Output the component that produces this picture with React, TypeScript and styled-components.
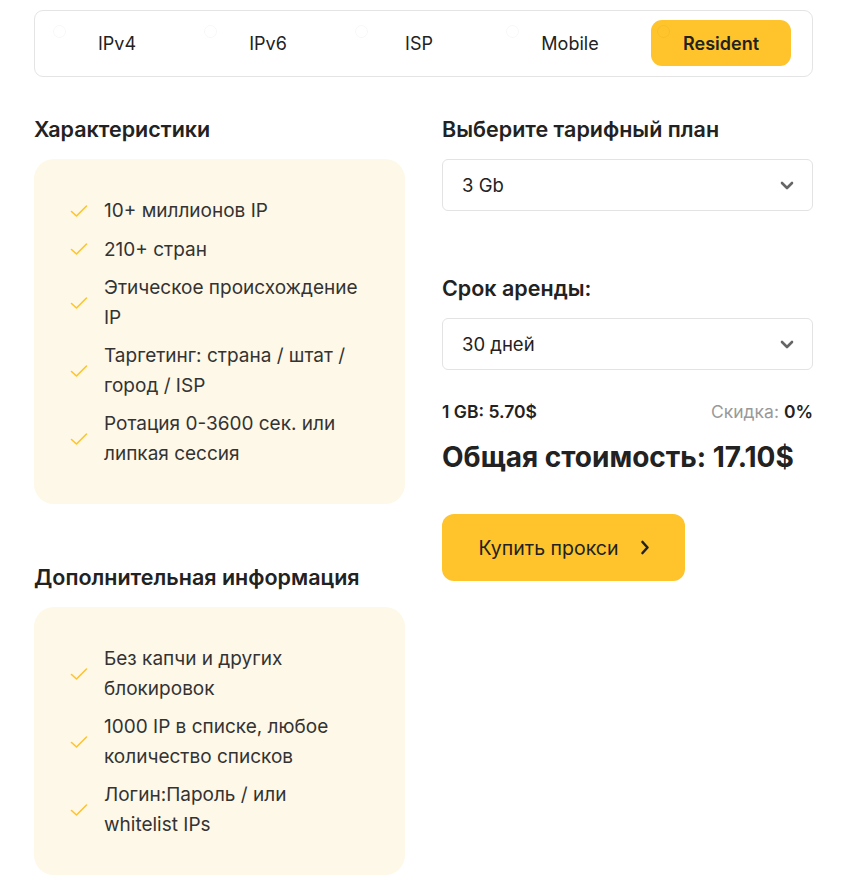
import React from "react";
import styled, { createGlobalStyle } from "styled-components";

const Global = createGlobalStyle`
  html, body { margin: 0; padding: 0; background: #fff; }
  body { font-family: Inter, "Noto Sans", sans-serif; color: #222; }
  * { box-sizing: border-box; }
`;

const Page = styled.div`
  width: 779px;
  margin: 10px 0 0 34px;
`;

const TabBar = styled.div`
  display: flex;
  gap: 11px;
  padding: 9px 12px;
  border: 1px solid #e4e4e4;
  border-radius: 9px;
  height: 67px;
`;

const Tab = styled.div<{ $active?: boolean }>`
  position: relative;
  width: 140px;
  height: 46px;
  display: flex;
  align-items: center;
  justify-content: center;
  border-radius: 11px;
  font-size: 18px;
  font-weight: ${(p) => (p.$active ? 600 : 400)};
  background: ${(p) => (p.$active ? "#ffc42b" : "transparent")};
  color: #222;
`;

const Radio = styled.span`
  position: absolute;
  left: 6px;
  top: 5px;
  width: 13px;
  height: 13px;
  border-radius: 50%;
  border: 1px solid rgba(0, 0, 0, 0.03);
`;

const Columns = styled.div`
  display: grid;
  grid-template-columns: 371px 371px;
  column-gap: 37px;
  margin-top: 39px;
`;

const Col = styled.div`
  display: flex;
  flex-direction: column;
`;

const Heading = styled.h2<{ $top?: number }>`
  margin: ${(p) => p.$top ?? 0}px 0 0;
  font-size: 21.5px;
  font-weight: 600;
  line-height: 26px;
  color: #222;
`;

const Card = styled.ul`
  list-style: none;
  margin: 17px 0 0;
  padding: 37px 44px 36px 36px;
  background: #fef8e8;
  border-radius: 20px;
  display: flex;
  flex-direction: column;
  gap: 9px;
`;

const Item = styled.li`
  display: flex;
  align-items: center;
  gap: 16px;
  font-size: 19px;
  line-height: 29.5px;
  color: #333;
`;

const Check = () => (
  <svg width="18" height="14" viewBox="0 0 18 14" fill="none" style={{ flexShrink: 0 }}>
    <path d="M1.5 7.5 L6.5 12 L16.5 2" stroke="#ffc42b" strokeWidth="1.6" strokeLinecap="round" strokeLinejoin="round" />
  </svg>
);

const Select = styled.div`
  margin-top: 17px;
  height: 52px;
  border: 1px solid #e3e3e3;
  border-radius: 6px;
  padding: 0 18px 0 19px;
  display: flex;
  align-items: center;
  justify-content: space-between;
  font-size: 18.5px;
  color: #222;
`;

const Chevron = () => (
  <svg width="14" height="9" viewBox="0 0 14 9" fill="none">
    <path d="M2 2 L7 7 L12 2" stroke="#666" strokeWidth="2.6" strokeLinecap="round" strokeLinejoin="round" />
  </svg>
);

const PriceRow = styled.div`
  margin-top: 31px;
  display: flex;
  justify-content: space-between;
  align-items: center;
  font-size: 17.5px;
  font-weight: 600;
  color: #222;
`;

const Muted = styled.span`
  color: #999;
  font-weight: 400;
`;

const Total = styled.div`
  margin-top: 18px;
  font-size: 28px;
  font-weight: 700;
  line-height: 34px;
  color: #222;
`;

const Button = styled.button`
  margin-top: 40px;
  width: 243px;
  height: 67px;
  border: none;
  border-radius: 12px;
  background: #ffc42b;
  display: flex;
  align-items: center;
  justify-content: center;
  gap: 22px;
  padding-left: 8px;
  font-family: inherit;
  font-size: 19.5px;
  color: #222;
  cursor: pointer;
`;

const Arrow = () => (
  <svg width="10" height="15" viewBox="0 0 10 15" fill="none">
    <path d="M2.5 2 L7.5 7.5 L2.5 13" stroke="#222" strokeWidth="2.6" strokeLinecap="round" strokeLinejoin="round" />
  </svg>
);

const tabs = ["IPv4", "IPv6", "ISP", "Mobile", "Resident"];

const features = [
  "10+ миллионов IP",
  "210+ стран",
  "Этическое происхождение IP",
  "Таргетинг: страна / штат / город / ISP",
  "Ротация 0-3600 сек. или липкая сессия",
];

const extra = [
  "Без капчи и других блокировок",
  "1000 IP в списке, любое количество списков",
  "Логин:Пароль / или whitelist IPs",
];

export default function App() {
  return (
    <>
      <Global />
      <Page>
        <TabBar>
          {tabs.map((t) => (
            <Tab key={t} $active={t === "Resident"}>
              <Radio />
              {t}
            </Tab>
          ))}
        </TabBar>
        <Columns>
          <Col>
            <Heading>Характеристики</Heading>
            <Card>
              {features.map((f) => (
                <Item key={f}>
                  <Check />
                  <span>{f}</span>
                </Item>
              ))}
            </Card>
            <Heading $top={60}>Дополнительная информация</Heading>
            <Card>
              {extra.map((f) => (
                <Item key={f}>
                  <Check />
                  <span>{f}</span>
                </Item>
              ))}
            </Card>
          </Col>
          <Col>
            <Heading>Выберите тарифный план</Heading>
            <Select>
              <span>3 Gb</span>
              <Chevron />
            </Select>
            <Heading $top={64}>Срок аренды:</Heading>
            <Select>
              <span>30 дней</span>
              <Chevron />
            </Select>
            <PriceRow>
              <span>1 GB: 5.70$</span>
              <span>
                <Muted>Скидка: </Muted>0%
              </span>
            </PriceRow>
            <Total>Общая стоимость: 17.10$</Total>
            <Button>
              <span>Купить прокси</span>
              <Arrow />
            </Button>
          </Col>
        </Columns>
      </Page>
    </>
  );
}
